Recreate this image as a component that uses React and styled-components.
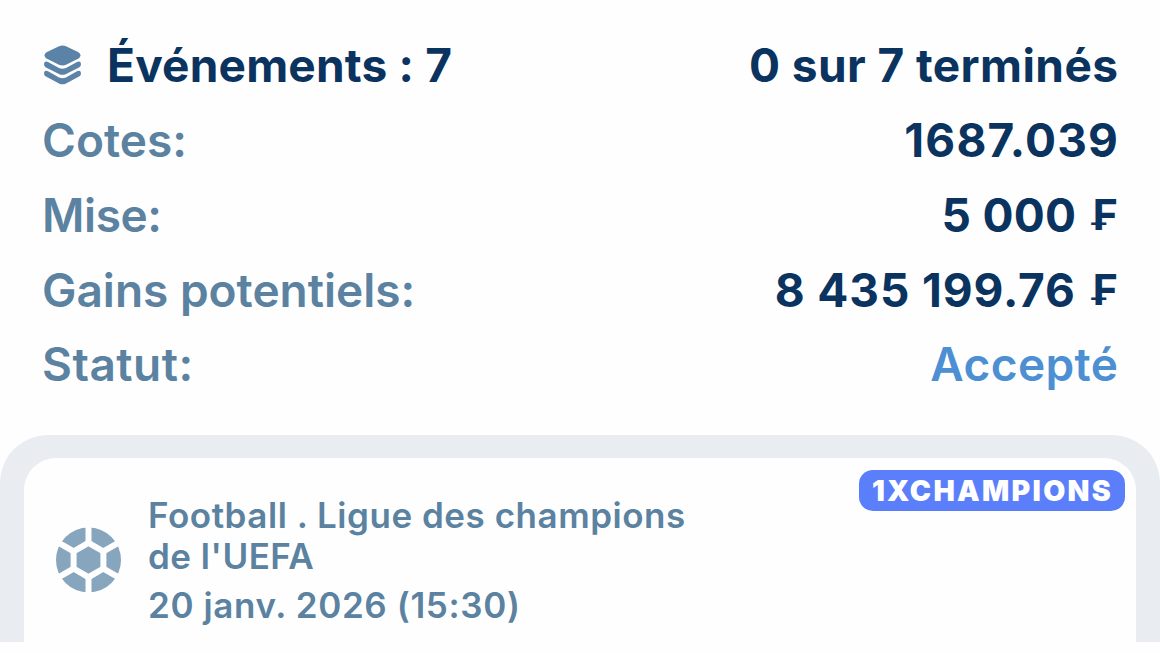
import React from 'react';
import styled, { createGlobalStyle } from 'styled-components';

const GlobalStyle = createGlobalStyle`
  * { box-sizing: border-box; }
  body {
    margin: 0;
    background: #fefefe;
    font-family: Inter, "Liberation Sans", sans-serif;
    font-feature-settings: "calt" 0;
    overflow: hidden;
  }
`;

const Page = styled.main`
  width: 1160px;
  height: 653px;
  display: flex;
  flex-direction: column;
`;

const Summary = styled.section`
  height: 435px;
  padding: 28px 42px 0 42px;
`;

const Row = styled.div`
  height: 75px;
  display: flex;
  justify-content: space-between;
  align-items: center;
  font-size: 46px;
  line-height: 75px;
  white-space: pre;

  &:last-child { height: 73px; }
`;

const Title = styled.div`
  display: flex;
  align-items: center;
  gap: 25px;
  padding-left: 1px;
  color: #0a335f;
  font-weight: 700;
`;

const Text = styled.span`
  letter-spacing: ${(p) => p.$spacing || 0}px;
  margin-right: ${(p) => -(p.$spacing || 0)}px;
`;

const Label = styled(Text)`
  color: #5b82a0;
  font-weight: 600;
`;

const Value = styled(Text)`
  color: ${(p) => (p.$accent ? '#4c8fd3' : '#0a335f')};
  font-weight: ${(p) => (p.$accent ? 600 : 700)};
`;

const Currency = styled.span`
  margin-left: 4px;
  font-size: 43px;
  line-height: 1;
  vertical-align: 2px;
`;

const Frame = styled.section`
  height: 207px;
  padding: 23px 24px 0;
  background: #e9edf2;
  border-radius: 48px 48px 0 0;
`;

const Card = styled.article`
  position: relative;
  height: 184px;
  padding: 37px 32px 0;
  display: flex;
  gap: 27px;
  background: #fefefe;
  border-radius: 32px 32px 0 0;
`;

const BallIcon = styled.svg`
  width: 65px;
  height: 66px;
  margin-top: 32px;
  flex: none;
`;

const Details = styled.div`
  color: #5b82a0;
  font-size: 35px;
  font-weight: 600;
  line-height: 41px;
`;

const Line = styled.div`
  white-space: pre;
  margin-top: ${(p) => p.$top || 0}px;
  letter-spacing: ${(p) => p.$spacing || 0}px;
`;

const Badge = styled.div`
  position: absolute;
  top: 12px;
  right: 11px;
  width: 266px;
  height: 41px;
  display: flex;
  align-items: center;
  justify-content: center;
  border-radius: 14px;
  background: #5b7ffa;
  color: #fff;
  font-size: 28.5px;
  font-weight: 900;
  letter-spacing: 2.3px;
  text-indent: 1px;
`;

const Layers = () => (
  <svg width="39" height="42" viewBox="0 0 39 42" fill="#5b82a7">
    <path d="M16 1.2 Q19.5 0 23 1.2 L35.5 7.2 Q39.5 10.4 35.5 13.6 L23 19.8 Q19.5 21.3 16 19.8 L3.5 13.6 Q-.5 10.4 3.5 7.2Z" />
    <path d="M1.5 17.2 Q3 16.1 5 17.1 L16 22.9 Q19.5 24.5 23 22.9 L34 17.1 Q36 16.1 37.5 17.2 Q38.9 20.5 36 22.4 L23 29 Q19.5 30.7 16 29 L3 22.4 Q.1 20.5 1.5 17.2Z" />
    <path d="M1.5 26.4 Q3 25.3 5 26.3 L16 32.4 Q19.5 34 23 32.4 L34 26.3 Q36 25.3 37.5 26.4 Q38.9 29.7 36 31.6 L23 38.4 Q19.5 40.1 16 38.4 L3 31.6 Q.1 29.7 1.5 26.4Z" />
  </svg>
);

const Ball = () => (
  <BallIcon viewBox="0 0 65 66">
    <circle cx="32.5" cy="33" r="32.5" fill="#88a5be" />
    <g fill="none" stroke="#fefefe" strokeWidth="6">
      <path d="M32.5 15.8 47.4 24.4V41.6L32.5 50.2 17.6 41.6V24.4Z" />
      <path d="M32.5 15.8V-2M47.4 24.4 64 14.8M47.4 41.6 64 51.2M32.5 50.2V68M17.6 41.6 1 51.2M17.6 24.4 1 14.8" />
    </g>
  </BallIcon>
);

export default function App() {
  return (
    <>
      <GlobalStyle />
      <Page>
        <Summary>
          <Row>
            <Title><Layers /><Text $spacing={0.2}>Événements : 7</Text></Title>
            <Value $spacing={0.42}>0 sur 7 terminés</Value>
          </Row>
          <Row><Label>Cotes:</Label><Value $spacing={1.2}>1687.039</Value></Row>
          <Row><Label $spacing={-0.4}>Mise:</Label><Value $spacing={0.3}>5 000 <Currency>₣</Currency></Value></Row>
          <Row><Label>Gains potentiels:</Label><Value $spacing={0.9}>8 435 199.76 <Currency>₣</Currency></Value></Row>
          <Row><Label $spacing={0.5}>Statut:</Label><Value $accent $spacing={0.4}>Accepté</Value></Row>
        </Summary>
        <Frame>
          <Card>
            <Ball />
            <Details>
              <Line $spacing={0.53}>Football . Ligue des champions</Line>
              <Line $spacing={0.5}>de l'UEFA</Line>
              <Line $top={8} $spacing={0.62}>20 janv. 2026 (15:30)</Line>
            </Details>
            <Badge>1XCHAMPIONS</Badge>
          </Card>
        </Frame>
      </Page>
    </>
  );
}
